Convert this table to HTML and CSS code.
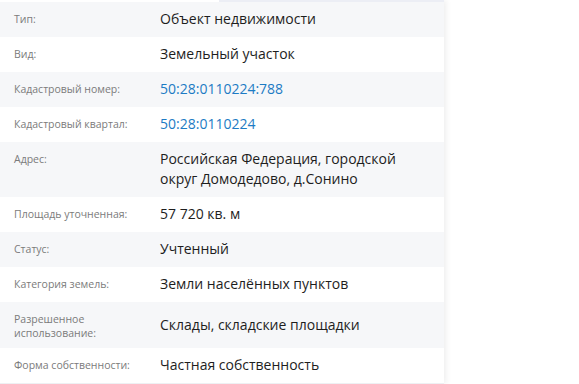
FILE: index.html
```html
<!DOCTYPE html>
<html lang="ru">
<head>
<meta charset="utf-8">
<title>Сведения об объекте</title>
<link rel="stylesheet" href="styles.css">
</head>
<body>
<div class="card">
  <div class="topline"><span class="tab-mark"></span></div>
  <dl class="props">
    <div class="row alt"><dt>Тип:</dt><dd>Объект недвижимости</dd></div>
    <div class="row"><dt>Вид:</dt><dd>Земельный участок</dd></div>
    <div class="row alt"><dt>Кадастровый номер:</dt><dd><a href="#">50:28:0110224:788</a></dd></div>
    <div class="row"><dt>Кадастровый квартал:</dt><dd><a href="#">50:28:0110224</a></dd></div>
    <div class="row alt"><dt>Адрес:</dt><dd>Российская Федерация, городской округ Домодедово, д.Сонино</dd></div>
    <div class="row"><dt>Площадь уточненная:</dt><dd>57 720 кв. м</dd></div>
    <div class="row alt"><dt>Статус:</dt><dd>Учтенный</dd></div>
    <div class="row"><dt>Категория земель:</dt><dd>Земли населённых пунктов</dd></div>
    <div class="row alt"><dt class="two">Разрешенное использование:</dt><dd>Склады, складские площадки</dd></div>
    <div class="row"><dt>Форма собственности:</dt><dd>Частная собственность</dd></div>
  </dl>
</div>
</body>
</html>
```

FILE: styles.css
```css
html, body {
  margin: 0;
  padding: 0;
  background: #ffffff;
}

body {
  font-family: "Open Sans", "Noto Sans", "Liberation Sans", sans-serif;
}

.card {
  width: 444px;
  background: #ffffff;
  box-shadow: 2px 0 6px rgba(0, 0, 0, 0.07);
  border-bottom: 1px solid #eef0f3;
}

.topline {
  height: 2px;
  display: flex;
}

.tab-mark {
  margin-left: 219px;
  flex: 1;
  background: #eceef5;
}

.props {
  margin: 0;
}

.row {
  display: grid;
  grid-template-columns: 146px 1fr;
  padding: 7px 14px 8px;
}

.row.alt {
  background: #f6f7f9;
}

.row dt {
  align-self: start;
  padding: 3px 6px 0 0;
  font-size: 10.5px;
  line-height: 14px;
  color: #7b7b7b;
}

.row dt.two {
  padding-right: 40px;
}

.row dd {
  align-self: center;
  margin: 0;
  font-size: 14px;
  line-height: 20px;
  color: #1e1e1e;
  max-width: 245px;
}

.row dd a {
  color: #1d7bc4;
  text-decoration: none;
}
```
